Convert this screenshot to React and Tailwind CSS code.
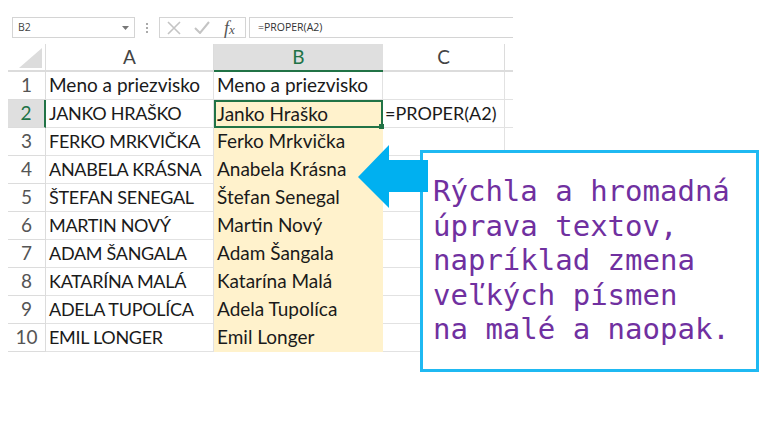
import React from "react";

const rows = [
  ["Meno a priezvisko", "Meno a priezvisko"],
  ["JANKO HRAŠKO", "Janko Hraško"],
  ["FERKO MRKVIČKA", "Ferko Mrkvička"],
  ["ANABELA KRÁSNA", "Anabela Krásna"],
  ["ŠTEFAN SENEGAL", "Štefan Senegal"],
  ["MARTIN NOVÝ", "Martin Nový"],
  ["ADAM ŠANGALA", "Adam Šangala"],
  ["KATARÍNA MALÁ", "Katarína Malá"],
  ["ADELA TUPOLÍCA", "Adela Tupolíca"],
  ["EMIL LONGER", "Emil Longer"],
];

const FormulaBar = () => (
  <div className="flex h-[21px] items-stretch gap-[3px] pl-[12px] font-['Open_Sans',sans-serif] text-[10.5px] text-[#444]">
    <div className="flex w-[123px] items-center justify-between border border-[#d4d4d4] pl-[5px] pr-[5px]">
      <span>B2</span>
      <svg width="7" height="4" viewBox="0 0 7 4"><path d="M0 0h7L3.5 4z" fill="#777" /></svg>
    </div>
    <div className="flex w-[18px] flex-col items-center justify-center gap-[2px]">
      <i className="h-[2px] w-[2px] bg-[#aaa]" />
      <i className="h-[2px] w-[2px] bg-[#aaa]" />
      <i className="h-[2px] w-[2px] bg-[#aaa]" />
    </div>
    <div className="flex w-[87px] items-center border border-[#d4d4d4] pl-[7px]">
      <svg width="14" height="14" viewBox="0 0 14 14" fill="none" stroke="#c4c4c4" strokeWidth="1.6">
        <path d="M1 1l12 12M13 1L1 13" />
      </svg>
      <svg className="ml-[13px]" width="16" height="13" viewBox="0 0 16 13" fill="none" stroke="#c4c4c4" strokeWidth="2">
        <path d="M1 7l5 5L15 1" />
      </svg>
      <span className="ml-[14px] font-['Liberation_Serif',serif] text-[18px] italic leading-none text-[#555]">
        f<span className="text-[13px]">x</span>
      </span>
    </div>
    <div className="flex flex-1 items-center border-y border-l border-[#d4d4d4] pl-[8px] text-[#333]">=PROPER(A2)</div>
  </div>
);

const ColumnHeader = () => (
  <div className="grid h-[28px] grid-cols-[38px_168px_169px_122px_8px] font-['Lato',sans-serif] text-[19px] leading-[26px] text-[#444]">
    <div className="border-r border-b-2 border-[#dcdcdc] pr-[3px] pt-[4px]">
      <svg width="34" height="22" viewBox="0 0 34 22"><path d="M34 0v20H11z" fill="#dcdcdc" /></svg>
    </div>
    <div className="border-r border-b-2 border-[#dcdcdc] text-center">A</div>
    <div className="border-b-2 border-[#217346] bg-[#dfdfdf] text-center text-[#217346]">B</div>
    <div className="border-r border-b-2 border-[#dcdcdc] text-center">C</div>
    <div className="border-b-2 border-[#dcdcdc]" />
  </div>
);

const Row = ({ index, name, proper }) => {
  const active = index === 2;
  return (
    <div className="grid h-[28px] grid-cols-[38px_168px_169px_122px_8px] font-['Lato',sans-serif] text-[19px] leading-[26px] text-[#1a1a1a]">
      <div
        className={
          active
            ? "border-r-2 border-b border-r-[#217346] border-b-[#dcdcdc] bg-[#dfdfdf] text-center text-[#217346]"
            : "border-r border-b border-[#dcdcdc] text-center text-[#555]"
        }
      >
        {index}
      </div>
      <div
        className={
          index === 1
            ? "whitespace-nowrap border-r border-b border-[#e2e2e2] pl-[3px]"
            : "whitespace-nowrap border-r border-b border-[#e2e2e2] pl-[3px] text-[18px] tracking-[-0.3px]"
        }
      >
        {name}
      </div>
      <div
        className={
          active
            ? "relative border-2 border-[#217346] bg-[#fff2cc] pl-[1px] leading-[24px]"
            : index === 1
              ? "border-r border-b border-[#e2e2e2] pl-[3px]"
              : "bg-[#fff2cc] pl-[3px]"
        }
      >
        {proper}
        {active && <i className="absolute -bottom-[3px] -right-[3px] h-[5px] w-[5px] bg-[#217346]" />}
      </div>
      <div className="whitespace-nowrap border-r border-b border-[#e2e2e2] pl-[2px] text-[18px]">{active ? "=PROPER(A2)" : ""}</div>
      <div className="border-b border-[#e2e2e2]" />
    </div>
  );
};

export default function App() {
  return (
    <div className="relative h-[432px] w-[768px] overflow-hidden bg-white pt-[17px]">
      <div className="w-[513px]">
        <FormulaBar />
        <div className="mt-[6px] pl-[8px]">
          <ColumnHeader />
          {rows.map((r, i) => (
            <Row key={i} index={i + 1} name={r[0]} proper={r[1]} />
          ))}
        </div>
      </div>

      <div className="absolute left-[420px] top-[150px] h-[222px] w-[339px] border-[3px] border-[#1fb9f2] bg-white pl-[10px] pt-[21px] font-['DejaVu_Sans_Mono',monospace] text-[29px] leading-[34.6px] text-[#7030a0]">
        <p>Rýchla a hromadná</p>
        <p>úprava textov,</p>
        <p>napríklad zmena</p>
        <p>veľkých písmen</p>
        <p>na malé a naopak.</p>
      </div>

      <svg className="absolute left-[358px] top-[145px]" width="71" height="64" viewBox="0 0 71 64">
        <path d="M0 32L31 0v15h39v32H31v16z" fill="#00b0f0" />
      </svg>
    </div>
  );
}
